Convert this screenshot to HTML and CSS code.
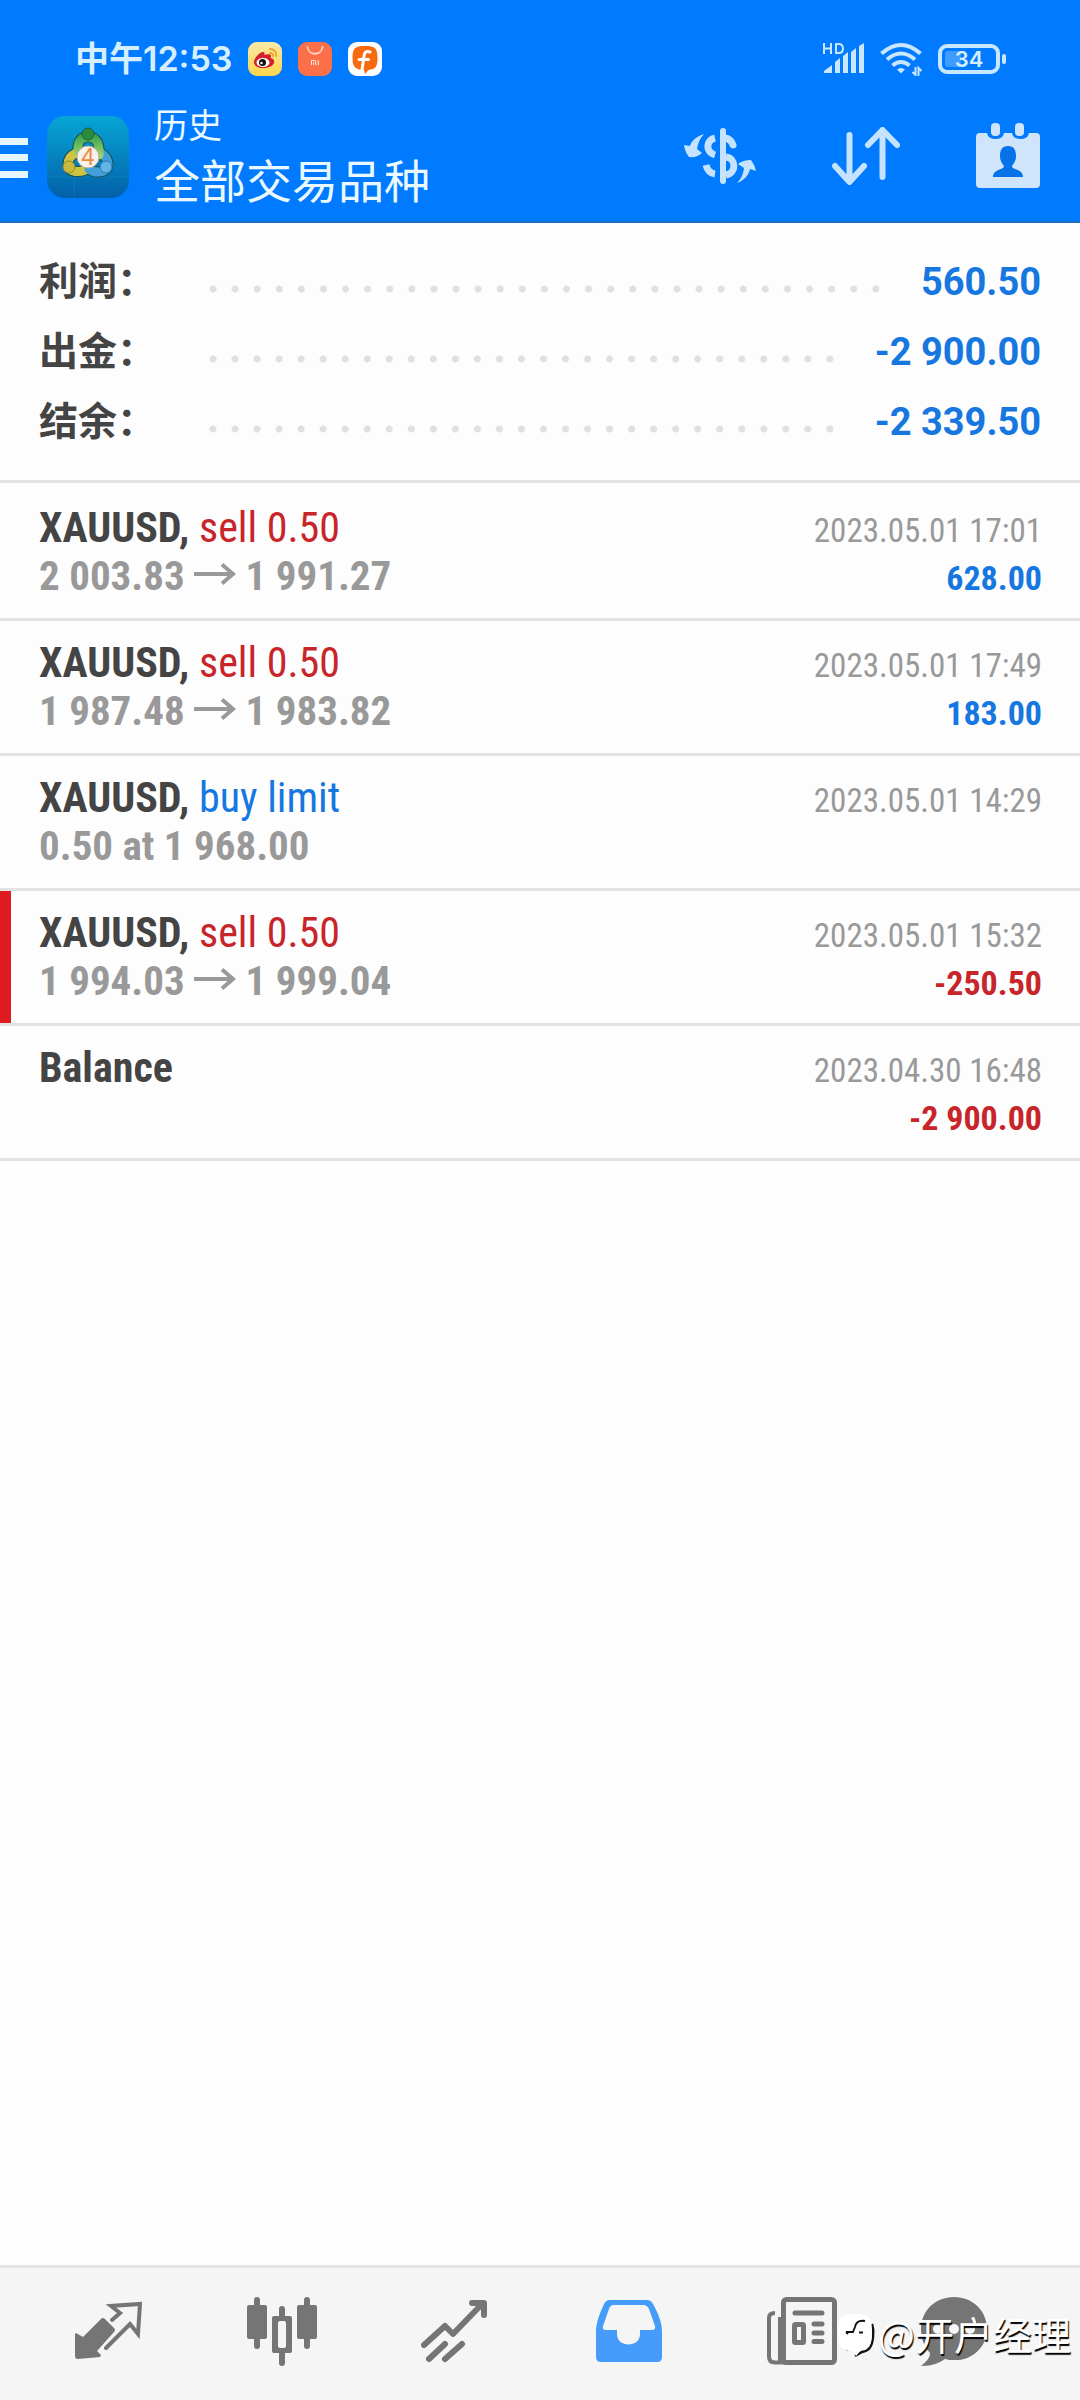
FILE: index.html
```html
<!DOCTYPE html>
<html lang="zh-CN">
<head>
<meta charset="utf-8">
<meta name="viewport" content="width=device-width">
<title>历史</title>
<link rel="stylesheet" href="styles.css">
</head>
<body>
<header class="top">
  <div class="status">
    <span class="clock">中午12:53</span>
    <svg class="app" viewBox="0 0 34 34"><defs><linearGradient id="wb" x1="0" y1="0" x2="0" y2="1"><stop offset="0" stop-color="#f9eaa8"/><stop offset="1" stop-color="#fbd54a"/></linearGradient></defs><rect width="34" height="34" rx="9" fill="url(#wb)"/><path d="M6 20c0-4 6-10 9-10 2 0 2 2 1 3 3-1 7-1 7 1 0 1-1 2 0 2 2 1 4 2 3 5-1 3-6 5-11 5S6 24 6 20z" fill="#d3202a"/><ellipse cx="15" cy="20.500" rx="6.500" ry="4.500" fill="#fff"/><circle cx="14.500" cy="20.500" r="3.500" fill="#111"/><circle cx="13.500" cy="21" r="1.200" fill="#fff"/><path d="M22 7c4 0 7 3 6 7M22 11c2 0 3 1 3 3" fill="none" stroke="#eea02a" stroke-width="1.800" stroke-linecap="round"/></svg>
    <svg class="app" viewBox="0 0 34 34"><rect width="34" height="34" rx="9" fill="#fb7049"/><path d="M9.500 5c1 9 14 9 15 0" fill="none" stroke="#ffd5c2" stroke-width="1.800" stroke-linecap="round"/><path d="M13.500 23v-4.500h3.200q1 0 1 1V23M15.600 20.300V23M20.300 18.200V23" fill="none" stroke="#ffe3d8" stroke-width="1.100"/></svg>
    <svg class="app" viewBox="0 0 34 34"><rect width="34" height="34" rx="9" fill="#fff"/><path d="M4.500 16C4.500 6 7 4 17 4s12.500 2 12.500 12c0 9-2 11-9 12l-3.500 4-1-4C7 27.500 4.500 25 4.500 16z" fill="#f76a10"/><path d="M22 10c-4-1.500-5.500 0-6 4l-2 14M11 17.500h9.500" fill="none" stroke="#fff" stroke-width="3" stroke-linecap="round"/></svg>
    <span class="spring"></span>
    <svg class="signal" viewBox="0 0 44 34"><g fill="none" stroke="#c9e6ff" stroke-width="2"><path d="M2 1v11M9 1v11M2 6.500h7M14 2v9h2.500q4.500 0 4.500-4.500T16.500 2z"/></g><path d="M2 31v-2l8-6v8zM13 31V20l5-4v15zM21 31V14l5-4v21zM29 31V10l5-4v25zM37 31V4l5-3v30z" fill="#c9e6ff"/></svg>
    <svg class="wifi" viewBox="0 0 42 34"><g fill="none" stroke="#c9e6ff" stroke-width="4"><path d="M1.500 11.500q19.500-17 39 0"/><path d="M7 17.500q14-12 28 0"/><path d="M12.500 23.500q8.500-7 17 0"/></g><path d="M17 27.500q4-3 8 0l-4 4z" fill="#c9e6ff"/><path d="M35.500 25v8l-3-3M38.500 34v-8l3 3" fill="none" stroke="#c9e6ff" stroke-width="2"/></svg>
    <span class="battery"><span class="level"></span><span class="pct">34</span></span><span class="nub"></span>
  </div>
  <div class="bar">
    <button class="menu" aria-label="菜单"><svg viewBox="0 0 28 40"><path d="M0 0h28v7H0zM0 16h28v7H0zM0 33h28v7H0z" fill="#e6f6ff"/></svg></button>
    <svg class="logo" viewBox="0 0 82 82"><defs><linearGradient id="bg" x1="0" y1="0" x2="0" y2="1"><stop offset="0" stop-color="#06a5d6"/><stop offset="1" stop-color="#0360a8"/></linearGradient><linearGradient id="gr" x1="0" y1="0" x2="0" y2="1"><stop offset="0" stop-color="#3fa650"/><stop offset="1" stop-color="#9ad46c"/></linearGradient></defs><rect width="82" height="82" rx="18" fill="url(#bg)"/><path d="M27 0v82M0 20h82M0 61h82" stroke="#2bb3dd" stroke-opacity=".2"/><g fill="none" stroke-linecap="round"><g stroke="#174f4d" stroke-width="11"><path d="M31 35q-1-14 10-14t11 14v4"/><path d="M29 37q-8 4-8 11c0 8 10 9 17 6"/><path d="M54 37q7 5 7 11c0 9-12 10-19 5"/></g><path d="M29 37q-8 4-8 11c0 8 10 9 17 6" stroke="#cfc343" stroke-width="9"/><path d="M54 37q7 5 7 11c0 9-12 10-19 5" stroke="#439fd8" stroke-width="9"/><path d="M31 35q-1-14 10-14t11 14v4" stroke="url(#gr)" stroke-width="9"/></g><circle cx="41" cy="18" r="6" fill="#2c8c3c" stroke="#17613b"/><circle cx="22" cy="51" r="6" fill="#c9b93f" stroke="#8d8a2a"/><circle cx="59" cy="51" r="6" fill="#62b4e6" stroke="#2b79b0"/><circle cx="41" cy="41" r="11" fill="#f7f2ee" stroke="#b9a99c"/><text x="41" y="49" text-anchor="middle" class="four">4</text></svg>
    <div class="titles"><h1>历史</h1><p>全部交易品种</p></div>
    <div class="actions">
      <button aria-label="交易品种"><svg viewBox="0 0 72 56" width="72" height="56"><g fill="#c5e2ff"><rect x="36" y="0" width="6" height="56" rx="3"/><path d="M20 6C11 9 7 14 6 18L0 17q1 7 5 12 8 1 13-4l-5-4c1-6 3-11 7-15zM53 55c9-3 12-10 13-14l6 2q-1-6-5-11-8 0-13 4l6 4c-1 7-3 11-7 15z"/></g><g fill="none" stroke="#c5e2ff" stroke-width="7"><path d="M31 10c-9 2-10 14 0 17M22 37q2 8 9 9M42 29c10 1 11 16 0 18"/><path d="M41 10q6 1 8 7" stroke-linecap="round"/></g></svg></button>
      <button aria-label="排序"><svg viewBox="0 0 68 58" width="68" height="58"><path d="M17.500 8v46M3 39l14.500 16L32 39M50.500 50V3M36 18L50.500 3 65 18" fill="none" stroke="#c5e2ff" stroke-width="6" stroke-linecap="round" stroke-linejoin="round"/></svg></button>
      <button aria-label="时段"><svg viewBox="0 0 64 66" width="64" height="66"><path d="M4 10h7q1 6 8.500 6t8.500-6h8q1 6 8.500 6t8.500-6h7q4 0 4 4v47q0 4-4 4H4q-4 0-4-4V14q0-4 4-4z" fill="#cfe5fc"/><rect x="15" y="0" width="9" height="13" rx="4" fill="#cfe5fc"/><rect x="39" y="0" width="9" height="13" rx="4" fill="#cfe5fc"/><path d="M32 23c6 0 8 4 8 10 0 5-2 7-4 10 0 4 11 3 11 11H17c0-8 11-7 11-11-2-3-4-5-4-10 0-6 2-10 8-10z" fill="#0674e8"/></svg></button>
    </div>
  </div>
</header>
<main>
  <dl class="summary">
    <div class="line"><dt>利润：</dt><dd>560.50</dd></div>
    <div class="line"><dt>出金：</dt><dd>-2 900.00</dd></div>
    <div class="line"><dt>结余：</dt><dd>-2 339.50</dd></div>
  </dl>
  <ul class="deals">
    <li><div class="row"><span class="name"><b>XAUUSD,</b> <span class="sell">sell 0.50</span></span><time>2023.05.01 17:01</time></div><div class="row"><span class="price">2 003.83 <svg class="arrow" viewBox="0 0 42 22"><path d="M0 11h39M28 1.500L39 11 28 20.500" /></svg> 1 991.27</span><b class="amount">628.00</b></div></li>
    <li><div class="row"><span class="name"><b>XAUUSD,</b> <span class="sell">sell 0.50</span></span><time>2023.05.01 17:49</time></div><div class="row"><span class="price">1 987.48 <svg class="arrow" viewBox="0 0 42 22"><path d="M0 11h39M28 1.500L39 11 28 20.500" /></svg> 1 983.82</span><b class="amount">183.00</b></div></li>
    <li><div class="row"><span class="name"><b>XAUUSD,</b> <span class="buy">buy limit</span></span><time>2023.05.01 14:29</time></div><div class="row"><span class="price">0.50 at 1 968.00</span></div></li>
    <li class="stopped"><div class="row"><span class="name"><b>XAUUSD,</b> <span class="sell">sell 0.50</span></span><time>2023.05.01 15:32</time></div><div class="row"><span class="price">1 994.03 <svg class="arrow" viewBox="0 0 42 22"><path d="M0 11h39M28 1.500L39 11 28 20.500" /></svg> 1 999.04</span><b class="amount loss">-250.50</b></div></li>
    <li><div class="row"><span class="name"><b>Balance</b></span><time>2023.04.30 16:48</time></div><div class="row"><span class="price">&nbsp;</span><b class="amount loss">-2 900.00</b></div></li>
  </ul>
</main>
<nav class="tabs">
  <button aria-label="行情"><svg viewBox="0 0 68 70"><path d="M1 36l7 4 18-18q2-2 4 0l9 9q2 2 0 4L22 54l4 4-1 2-22 2q-3 0-3-3V37z" fill="#757575"/><path d="M37 23l8-7-9-7 29-2-2 30-8-10-24 24" fill="none" stroke="#757575" stroke-width="4" stroke-linecap="round"/></svg></button>
  <button aria-label="图表"><svg viewBox="0 0 70 70"><g fill="#757575"><rect x="7" y="0" width="6" height="52" rx="3"/><rect x="0" y="8" width="20" height="34" rx="2"/><rect x="57" y="0" width="6" height="52" rx="3"/><rect x="50" y="8" width="20" height="34" rx="2"/><rect x="32" y="9" width="6" height="60" rx="3"/><rect x="25" y="19" width="20" height="37" rx="2"/></g><rect x="31" y="24" width="8" height="27" rx="2" fill="#f5f5f5"/></svg></button>
  <button aria-label="交易"><svg viewBox="0 0 68 70"><path d="M3 48l21-19 8 8L61 7M51 6h12v12M8 62l16-15M24 62l17-15" fill="none" stroke="#757575" stroke-width="6" stroke-linecap="round" stroke-linejoin="round"/></svg></button>
  <button aria-label="历史" aria-current="page"><svg viewBox="0 0 68 70"><path d="M15 3h37q4 0 6 4c5 9 9 18 9 28v25q0 5-5 5H6q-5 0-5-5V35C1 25 5 16 9 7q2-4 6-4z" fill="#459cfb"/><path d="M19 8h29q4 0 6 4l6 17q1 4-3 4H45v4c0 14-23 14-23 0v-4H11q-4 0-3-4l6-17q1-4 5-4z" fill="#f5f5f5"/></svg></button>
  <button aria-label="新闻"><svg viewBox="0 0 70 70"><path d="M18 65.500H8q-6 0-6-6V21q0-5 6-5M13 20v45" fill="none" stroke="#757575" stroke-width="4"/><rect x="16.500" y="2.500" width="51" height="63" rx="3" fill="none" stroke="#757575" stroke-width="5"/><path d="M28 16h27M47 27h8M47 36h8M47 44.500h8" stroke="#757575" stroke-width="5" stroke-linecap="round"/><rect x="27.500" y="27.500" width="9" height="18" rx="1" fill="none" stroke="#757575" stroke-width="5"/></svg></button>
  <button aria-label="消息"><svg viewBox="0 0 68 70"><path d="M34 0c19 0 33 14 33 32S52 64 34 63c-3 0-6 0-9-1-6 4-12 7-24 7 5-4 9-8 9-13C4 50 1 41 1 32 1 14 15 0 34 0z" fill="#757575"/><g fill="#f5f5f5"><circle cx="18" cy="32" r="5"/><circle cx="34" cy="32" r="5"/><circle cx="50" cy="32" r="5"/></g></svg></button>
  <div class="mark"><svg viewBox="0 0 38 46"><path d="M34 10q2 6 1 13c-1 10-4 14-11 15l-7 4M5 33l5 3" fill="none" stroke="#111" stroke-width="2.500"/><path d="M0 18C0 3 3 0 17 0s17 3 17 18c0 14-3 17-11 18l-5 6-3-5C3 37 0 33 0 18z" fill="#fff"/><path d="M27 7c-6-1-9 1-10 6l-2 5H8M8 18l2 2M21 18.500h4" fill="none" stroke="#111" stroke-width="1.800"/></svg><span>@开户经理</span></div>
</nav>
</body>
</html>
```
FILE: styles.css
```css
* { box-sizing: border-box; }
body {
  margin: 0;
  min-height: 100vh;
  display: flex;
  flex-direction: column;
  background: #fdfdfd;
  color: #444;
  font-family: Roboto, "Noto Sans CJK SC", sans-serif;
}
h1, p, dl, dd, ul { margin: 0; padding: 0; }
button { border: 0; padding: 0; background: none; cursor: pointer; }
svg { display: block; }

.top { background: #007bff; border-bottom: 2px solid #1a70c4; color: #eaf8ff; }
.status { display: flex; align-items: center; height: 104px; padding: 14px 74px 0 75px; }
.clock { width: 173px; font: 600 34px/40px Inter, "Noto Sans CJK SC", sans-serif; color: #d6efff; white-space: nowrap; }
.app { width: 34px; height: 34px; margin-right: 16px; }
.spring { flex: 1; }
.signal { width: 44px; height: 34px; margin-right: 14px; }
.wifi { width: 42px; height: 34px; margin-right: 16px; }
.battery {
  display: flex; align-items: center; justify-content: center;
  position: relative;
  width: 62px; height: 30px;
  border: 4px solid #c9e6ff; border-radius: 9px;
}
.level { position: absolute; left: 3px; top: 3px; bottom: 3px; width: 16px; border-radius: 3px; background: #409cff; }
.pct { position: relative; font: 600 22px/22px Inter, sans-serif; color: #d6efff; }
.nub { width: 4px; height: 10px; margin-left: 2px; border-radius: 2px; background: #c9e6ff; }

.bar { display: flex; align-items: center; height: 117px; padding-right: 40px; }
.menu { margin-bottom: 10px; }
.menu svg { width: 28px; height: 40px; }
.logo { width: 82px; height: 82px; margin: 0 25px 12px 19px; }
.four { font: 24px "Liberation Sans", sans-serif; fill: #f08a3c; }
.titles { flex: 1; padding-bottom: 10px; }
.titles h1 { font-weight: 400; font-size: 34px; line-height: 48px; }
.titles p { font-size: 46px; line-height: 64px; }
.actions { display: flex; align-items: center; gap: 76px; padding-bottom: 14px; }

.summary { padding: 24px 39px 23px; border-bottom: 3px solid #e3e3e3; }
.line { display: flex; align-items: center; height: 70px; font-size: 39px; line-height: 70px; }
.line dt { width: 163px; font-weight: 700; white-space: nowrap; }
.line dd { flex: 1; display: flex; font-size: 38px; font-weight: 700; color: #1677e0; white-space: nowrap; }
.line dd::before {
  content: "";
  flex: 1;
  height: 22px;
  margin: 31px 34px 0 0;
  background: radial-gradient(circle, #e0e0e0 3px, transparent 4px) left center / 22px 22px space no-repeat;
}

.deals { list-style: none; padding-top: 3px; font-family: "Roboto Condensed", "Liberation Sans Narrow", Roboto, sans-serif; }
.deals li { padding: 18px 38px 18px 39px; border-bottom: 3px solid #e3e3e3; }
.deals li.stopped { box-shadow: inset 11px 0 #e01b20; }
.row { display: flex; justify-content: space-between; align-items: baseline; height: 48px; line-height: 48px; white-space: nowrap; }
.name { font-size: 42px; }
.price { font-size: 41px; font-weight: 700; color: #999; }
.sell { color: #c8252a; }
.buy { color: #1677e0; }
time { font-size: 33px; color: #999; }
.amount { font-size: 34px; color: #1677e0; }
.loss { color: #c8252a; }
.arrow { display: inline-block; width: 42px; height: 22px; vertical-align: 5px; }
.arrow path { fill: none; stroke: #999; stroke-width: 4; }

.tabs {
  position: relative;
  display: grid;
  grid-template-columns: repeat(5, 4fr) 3fr;
  margin-top: auto;
  height: 135px;
  padding: 0 61px 0 22px;
  background: #f5f5f5;
  border-top: 3px solid #e3e3e3;
}
.tabs button { display: flex; justify-content: center; padding-top: 29px; }
.tabs button svg { height: 70px; }
.mark { position: absolute; right: 9px; bottom: 34px; display: flex; align-items: center; gap: 2px; }
.mark svg { width: 38px; height: 46px; }
.mark span { margin-bottom: 8px; font: 39px/50px "Noto Sans CJK SC", sans-serif; color: #fff; text-shadow: 1px 2px 1px #000; }
```
